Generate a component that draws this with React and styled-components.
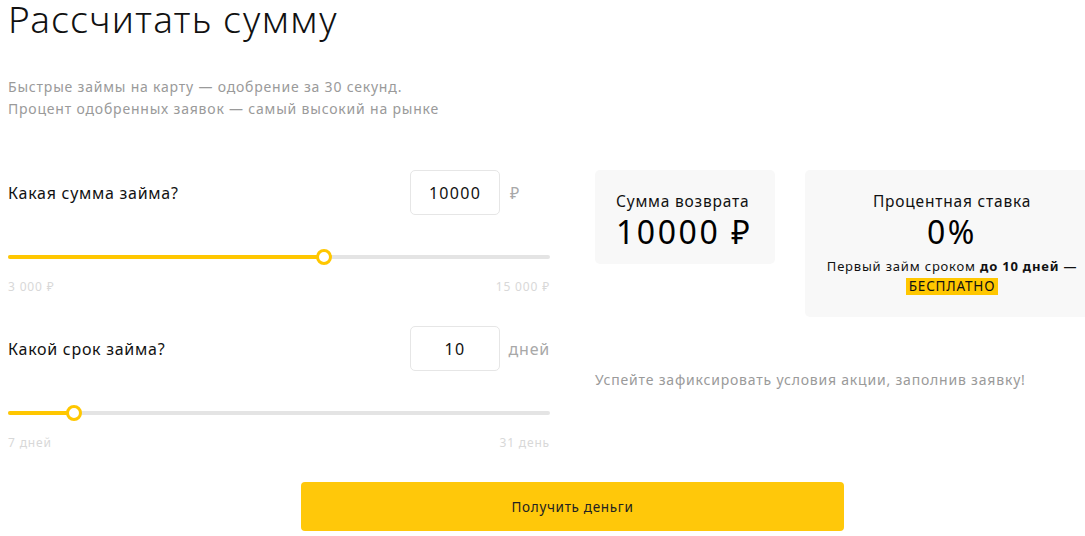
import React from "react";
import styled, { createGlobalStyle } from "styled-components";

const GlobalStyle = createGlobalStyle`
  body {
    margin: 0;
    background: #fff;
    font-family: "Noto Sans", "Open Sans", sans-serif;
    color: #1a1a1a;
  }
`;

const Page = styled.div`
  width: 1085px;
  height: 536px;
  overflow: hidden;
  padding: 0 0 0 8px;
  box-sizing: border-box;
  letter-spacing: 0.05em;
`;

const Title = styled.h1`
  margin: 0;
  font-size: 37px;
  line-height: 38px;
  font-weight: 300;
  color: #111;
  letter-spacing: 0.035em;
`;

const Lead = styled.p`
  margin: 38px 0 0;
  font-size: 14px;
  line-height: 22px;
  color: #9a9a9a;
`;

const Main = styled.div`
  display: flex;
  gap: 45px;
  margin-top: 50px;
`;

const Left = styled.div`
  width: 542px;
  flex-shrink: 0;
  display: flex;
  flex-direction: column;
  gap: 31px;
`;

const Field = styled.div`
  display: flex;
  flex-direction: column;
`;

const FieldHead = styled.div`
  display: flex;
  align-items: center;
`;

const Label = styled.div`
  flex: 1;
  font-size: 16px;
  letter-spacing: 0.045em;
  color: #111;
`;

const NumInput = styled.div`
  width: 90px;
  height: 45px;
  box-sizing: border-box;
  border: 1px solid #e6e6e6;
  border-radius: 5px;
  display: flex;
  align-items: center;
  justify-content: center;
  font-size: 16px;
  letter-spacing: 0.08em;
  color: #111;
`;

const Unit = styled.div`
  width: 50px;
  padding-left: ${(p) => (p.$pad ? "10px" : "0")};
  box-sizing: border-box;
  text-align: ${(p) => (p.$pad ? "left" : "right")};
  font-size: 16px;
  color: #a8a8a8;
`;

const Track = styled.div`
  position: relative;
  height: 4px;
  margin-top: 40px;
  border-radius: 2px;
  background: #e4e4e4;
`;

const Fill = styled.div`
  height: 100%;
  border-radius: 2px;
  background: #ffc700;
`;

const Thumb = styled.div`
  position: absolute;
  top: 50%;
  width: 16px;
  height: 16px;
  box-sizing: border-box;
  border: 3px solid #ffc700;
  border-radius: 50%;
  background: #fff;
  transform: translate(-50%, -50%);
`;

const Range = styled.div`
  display: flex;
  justify-content: space-between;
  margin-top: 19px;
  font-size: 12px;
  letter-spacing: 0.07em;
  color: #d8d8d8;
`;

const Right = styled.div`
  flex: 1;
  min-width: 0;
  display: flex;
  flex-direction: column;
`;

const Cards = styled.div`
  display: flex;
  align-items: flex-start;
  gap: 30px;
`;

const Card = styled.div`
  background: #f8f8f8;
  border-radius: 5px;
  box-sizing: border-box;
  flex-shrink: 0;
  width: ${(p) => p.$w}px;
  height: ${(p) => p.$h}px;
  padding: ${(p) => (p.$center ? "20px 0 0" : "20px 0 0 21px")};
  text-align: ${(p) => (p.$center ? "center" : "left")};
`;

const CardTitle = styled.div`
  font-size: 15.5px;
  line-height: 22px;
  color: #111;
`;

const BigValue = styled.div`
  font-size: 32px;
  line-height: 40px;
  letter-spacing: 0.08em;
  color: #000;
`;

const Note = styled.div`
  margin-top: 4px;
  font-size: 13px;
  line-height: 20px;
  color: #111;

  b {
    font-weight: 700;
  }
`;

const Badge = styled.span`
  display: inline-block;
  background: #ffc700;
  padding: 0 3px;
  line-height: 17px;
  font-size: 13.5px;
`;

const Hint = styled.div`
  margin-top: 53px;
  font-size: 14px;
  color: #9a9a9a;
`;

const Footer = styled.div`
  display: flex;
  margin-top: 31px;
  padding-left: 293px;
`;

const Button = styled.button`
  width: 543px;
  height: 49px;
  border: none;
  border-radius: 4px;
  background: #ffc80a;
  font-family: inherit;
  font-size: 13.5px;
  letter-spacing: 0.05em;
  color: #222;
  cursor: pointer;
`;

const Slider = ({ label, value, unit, pct, min, max, padUnit }) => (
  <Field>
    <FieldHead>
      <Label>{label}</Label>
      <NumInput>{value}</NumInput>
      <Unit $pad={padUnit}>{unit}</Unit>
    </FieldHead>
    <Track>
      <Fill style={{ width: `${pct}%` }} />
      <Thumb style={{ left: `${pct}%` }} />
    </Track>
    <Range>
      <span>{min}</span>
      <span>{max}</span>
    </Range>
  </Field>
);

const App = () => (
  <Page>
    <GlobalStyle />
    <Title>Рассчитать сумму</Title>
    <Lead>
      Быстрые займы на карту — одобрение за 30 секунд.
      <br />
      Процент одобренных заявок — самый высокий на рынке
    </Lead>
    <Main>
      <Left>
        <Slider
          label="Какая сумма займа?"
          value="10000"
          unit="₽"
          padUnit
          pct={58.3}
          min="3 000 ₽"
          max="15 000 ₽"
        />
        <Slider
          label="Какой срок займа?"
          value="10"
          unit="дней"
          pct={12.2}
          min="7 дней"
          max="31 день"
        />
      </Left>
      <Right>
        <Cards>
          <Card $w={180} $h={94}>
            <CardTitle>Сумма возврата</CardTitle>
            <BigValue>10000 ₽</BigValue>
          </Card>
          <Card $w={294} $h={147} $center>
            <CardTitle>Процентная ставка</CardTitle>
            <BigValue>0%</BigValue>
            <Note>
              Первый займ сроком <b>до 10 дней —</b>
              <br />
              <Badge>БЕСПЛАТНО</Badge>
            </Note>
          </Card>
        </Cards>
        <Hint>Успейте зафиксировать условия акции, заполнив заявку!</Hint>
      </Right>
    </Main>
    <Footer>
      <Button>Получить деньги</Button>
    </Footer>
  </Page>
);

export default App;
